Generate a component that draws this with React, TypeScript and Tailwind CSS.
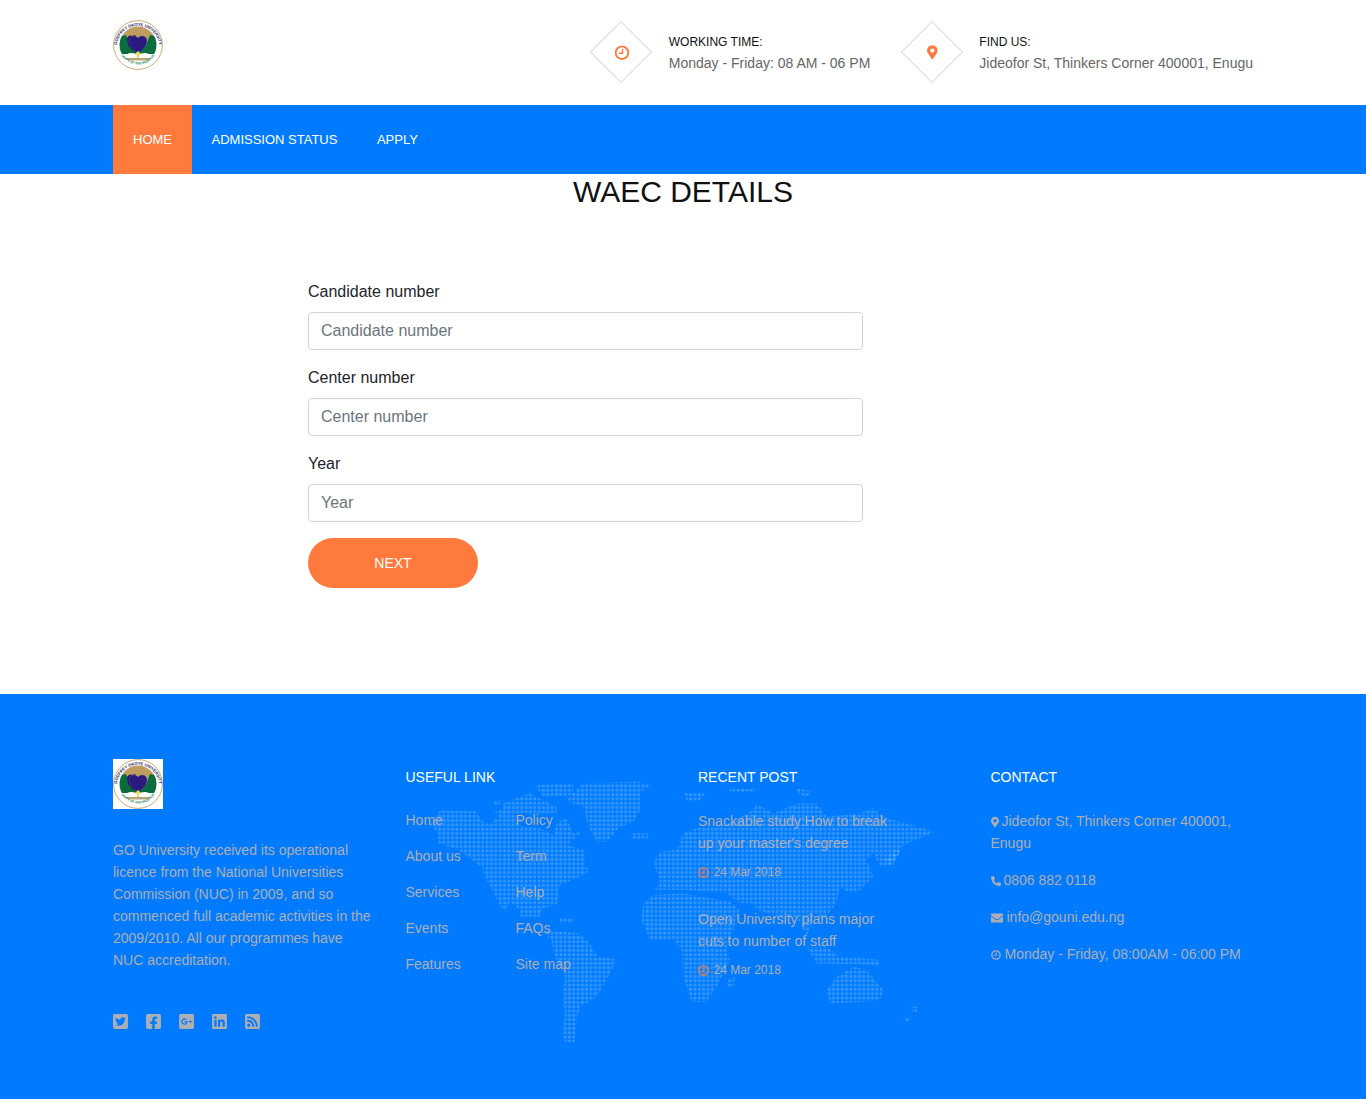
import {
  FaEnvelope,
  FaFacebookSquare,
  FaGooglePlusSquare,
  FaLinkedin,
  FaMapMarkerAlt,
  FaPhoneAlt,
  FaRssSquare,
  FaTwitterSquare,
} from "react-icons/fa";

type Pt = [number, number];

const usefulLinks = ["Home", "About us", "Services", "Events", "Features"];
const moreLinks = ["Policy", "Term", "Help", "FAQs", "Site map"];

const westShapes: Pt[][] = [
  [[280, 90], [300, 90], [300, 105], [280, 105]],
  [[310, 100], [390, 70], [470, 110], [470, 130], [270, 135], [310, 115]],
  [[405, 45], [520, 40], [520, 75], [430, 80]],
  [[505, 85], [550, 40], [715, 35], [750, 45], [720, 70], [720, 120], [700, 155], [660, 170], [620, 215], [590, 215], [565, 170], [550, 110], [505, 95]],
  [[695, 190], [745, 190], [745, 205], [695, 205]],
  [[480, 445], [520, 445], [520, 460], [480, 460]],
  [[90, 165], [118, 122], [225, 122], [245, 150], [270, 165], [300, 130], [345, 130], [350, 165], [420, 175], [460, 195], [470, 160], [500, 145], [520, 190], [545, 185], [520, 210], [500, 225], [555, 240], [555, 290], [570, 300], [540, 320], [480, 345], [470, 405], [430, 415], [420, 440], [360, 440], [360, 420], [330, 395], [320, 425], [300, 410], [280, 365], [250, 310], [250, 295], [210, 265], [175, 240], [115, 220], [115, 190]],
  [[420, 480], [535, 490], [570, 520], [590, 555], [650, 570], [640, 590], [620, 630], [590, 680], [540, 710], [530, 750], [525, 815], [495, 815], [485, 790], [495, 740], [490, 670], [495, 620], [460, 550], [455, 510]],
];

const eastShapes: Pt[][] = [
  [[40, 280], [60, 245], [110, 240], [130, 190], [180, 170], [260, 165], [340, 120], [350, 100], [400, 130], [470, 100], [530, 100], [560, 140], [660, 130], [700, 115], [740, 145], [800, 160], [885, 185], [840, 205], [790, 225], [760, 285], [720, 290], [700, 250], [680, 270], [700, 320], [660, 360], [630, 370], [600, 350], [590, 400], [550, 450], [525, 430], [500, 500], [470, 440], [420, 440], [350, 420], [340, 400], [300, 400], [260, 370], [140, 360], [90, 360], [45, 360], [60, 330]],
  [[10, 400], [40, 375], [130, 370], [270, 395], [300, 420], [280, 480], [260, 540], [270, 570], [230, 650], [200, 695], [155, 695], [130, 620], [125, 540], [100, 510], [30, 510], [5, 450]],
  [[500, 530], [560, 530], [600, 560], [720, 570], [720, 585], [530, 580]],
  [[560, 660], [590, 620], [640, 590], [680, 600], [730, 660], [720, 690], [680, 695], [570, 700]],
  [[815, 710], [835, 710], [835, 725], [815, 725]],
  [[790, 745], [815, 740], [800, 760]],
  [[265, 625], [285, 620], [280, 650], [262, 650]],
  [[270, 55], [345, 55], [345, 65], [270, 65]],
  [[135, 70], [195, 70], [180, 95], [140, 95]],
  [[470, 55], [520, 65], [500, 80], [470, 70]],
  [[735, 270], [770, 235], [780, 250], [750, 285]],
];

const toPoints = (shape: Pt[], originX: number) =>
  shape.map(([x, y]) => `${originX + x / 3},${770 + y / 3}`).join(" ");

function WorldMap() {
  return (
    <svg className="absolute left-0 top-0 h-full w-full" aria-hidden="true">
      <defs>
        <pattern id="map-dots" width="4.33" height="4.33" patternUnits="userSpaceOnUse">
          <rect x="0.6" y="0.6" width="3.1" height="3.1" rx="1.2" fill="#ffffff" fillOpacity="0.2" />
        </pattern>
      </defs>
      <g transform="translate(0 -694)" fill="url(#map-dots)">
        {westShapes.map((s, i) => (
          <polygon key={i} points={toPoints(s, 400)} />
        ))}
        {eastShapes.map((s, i) => (
          <polygon key={i} points={toPoints(s, 640)} />
        ))}
      </g>
    </svg>
  );
}

// old font-awesome clock-o, hands point up and left
function ClockIcon({ className }: { className?: string }) {
  return (
    <svg viewBox="0 0 16 16" className={className} fill="none" stroke="currentColor">
      <circle cx="8" cy="8" r="6.7" strokeWidth="2" />
      <path d="M8.6 3.8v4.8H4.6" strokeWidth="1.5" />
    </svg>
  );
}

function Logo({ id }: { id: string }) {
  return (
    <svg width="50" height="50" viewBox="0 0 50 50" className="block">
      <defs>
        <clipPath id={`${id}-disc`}>
          <circle cx="25" cy="25" r="18.5" />
        </clipPath>
        <path id={`${id}-top`} d="M3.8 27a21.2 21.2 0 0 1 42.4 0" />
        <path id={`${id}-bottom`} d="M8 35a20 20 0 0 0 34 0" />
      </defs>
      <circle cx="25" cy="25" r="24.4" fill="#fff" stroke="#c9ab78" strokeWidth="1" />
      <g clipPath={`url(#${id}-disc)`}>
        <rect x="5" y="5" width="40" height="40" fill="#fff" />
        <rect x="5" y="6" width="40" height="18" fill="#bf9c5f" />
        <path d="M5 17l8-2 4 10 8 7 8-7 4-10 8 2v17H5z" fill="#0b6d3d" />
        <path d="M14 18c2-3 4-3 5-2l3-1 1 2 4 4-2 12-6-3-4-5z" fill="#1f1668" />
        <path d="M25 33c-5-3-9-7-9-12 0-3 2-5 5-5 2 0 3 1 4 2 1-1 2-2 4-2 3 0 5 2 5 5 0 5-4 9-9 12z" fill="#2a1a80" stroke="#6b6aa8" strokeWidth="0.4" />
        <path d="M9 38c5-6 11-6 16-3 5-3 11-3 16 3z" fill="#fff" />
        <path d="M10 38h30v2.4H10z" fill="#b9a67c" />
        <path d="M25 31l3 3-2 1v3h-2v-3l-2-1z" fill="#f3d75c" />
      </g>
      <text fontSize="4.1" fontFamily="'Liberation Sans', sans-serif" fontWeight="700" fill="#1d1a66">
        <textPath href={`#${id}-top`} startOffset="50%" textAnchor="middle">
          GODFREY OKOYE UNIVERSITY
        </textPath>
      </text>
      <text fontSize="3.4" fontFamily="'Liberation Sans', sans-serif" fontWeight="700" fill="#2f8a5f">
        <textPath href={`#${id}-bottom`} startOffset="50%" textAnchor="middle">
          UNITY OF KNOWLEDGE
        </textPath>
      </text>
    </svg>
  );
}

function InfoBlock({ icon, title, text }: { icon: React.ReactNode; title: string; text: string }) {
  return (
    <div className="flex items-center">
      <div className="flex h-[62px] w-[62px] items-center justify-center">
        <div className="flex h-[44px] w-[44px] rotate-45 items-center justify-center border border-[#d9d9e3]">
          <span className="-rotate-45 text-[#ff7a3c]">{icon}</span>
        </div>
      </div>
      <div className="ml-[16.5px] mt-[2px]">
        <div className="text-[12px] uppercase leading-[18px] text-[#111]">{title}</div>
        <div className="mt-[2px] text-[14px] leading-[21px] text-[#666]">{text}</div>
      </div>
    </div>
  );
}

function FormField({ label }: { label: string }) {
  return (
    <div className="mb-4">
      <label className="mb-2 block text-[16px] leading-6 text-[#212529]">{label}</label>
      <input
        placeholder={label}
        className="block h-[38px] w-full rounded border border-[#ced4da] px-3 text-[16px] text-[#495057] placeholder:text-[#6c757d]"
      />
    </div>
  );
}

function Post({ title, last }: { title: string; last?: boolean }) {
  return (
    <div className={last ? "" : "mb-[25px]"}>
      <div className="w-[200px] text-[14px] leading-[22px]">{title}</div>
      <div className="mt-[7px] flex h-[22px] items-center text-[12px]">
        <ClockIcon className="mr-[4.5px] h-[11px] w-[11px] text-[#ff7a3c]" />
        24 Mar 2018
      </div>
    </div>
  );
}

export default function App() {
  return (
    <div className="font-['Liberation_Sans',Arial,sans-serif]">
      <header className="mx-auto flex h-[105px] w-[1170px] items-start justify-between px-[15px]">
        <div className="pt-5">
          <Logo id="head-logo" />
        </div>
        <div className="flex gap-[30.5px] pt-[21px]">
          <InfoBlock icon={<ClockIcon className="h-[15px] w-[15px] translate-x-[1px]" />} title="Working time:" text="Monday - Friday: 08 AM - 06 PM" />
          <InfoBlock icon={<FaMapMarkerAlt className="h-[14px] w-[11px]" />} title="Find us:" text="Jideofor St, Thinkers Corner 400001, Enugu" />
        </div>
      </header>

      <nav className="h-[69px] bg-[#007bff]">
        <ul className="mx-auto flex h-full w-[1170px] px-[15px] text-[13px] uppercase text-white">
          <li className="flex items-center bg-[#ff7a3c] px-5">Home</li>
          <li className="flex items-center px-[19.5px]">Admission Status</li>
          <li className="flex items-center pl-5">Apply</li>
        </ul>
      </nav>

      <main className="h-[520px]">
        <h1 className="text-center text-[30px] leading-[36px] text-[#111]">WAEC DETAILS</h1>
        <form className="mx-auto mt-[70px] w-[750px]">
          <div className="w-[555px]">
            <FormField label="Candidate number" />
            <FormField label="Center number" />
            <FormField label="Year" />
            <button type="button" className="h-[50px] w-[170px] rounded-full bg-[#ff7a3c] text-[14px] uppercase text-white">
              Next
            </button>
          </div>
        </form>
      </main>

      <footer className="relative h-[405px] overflow-hidden bg-[#007bff] text-[#adaeb4]">
        <WorldMap />
        <div className="relative mx-auto grid w-[1170px] grid-cols-4 pt-[65px]">
          <div className="px-[15px]">
            <div className="h-[50px] w-[50px] bg-white">
              <Logo id="foot-logo" />
            </div>
            <p className="mt-[30px] text-[14px] leading-[22px]">
              GO University received its operational licence from the National Universities Commission (NUC) in 2009, and so commenced full academic activities in the 2009/2010. All our programmes have NUC accreditation.
            </p>
            <div className="mt-[42px] flex gap-[18px]">
              <FaTwitterSquare className="h-[17px] w-[15px]" />
              <FaFacebookSquare className="h-[17px] w-[15px]" />
              <FaGooglePlusSquare className="h-[17px] w-[15px]" />
              <FaLinkedin className="h-[17px] w-[15px]" />
              <FaRssSquare className="h-[17px] w-[15px]" />
            </div>
          </div>

          <div className="px-[15px] pt-[7px]">
            <h4 className="mb-[21px] text-[14px] uppercase leading-[22px] text-white">Useful link</h4>
            <div className="flex text-[14px] leading-[22px]">
              <ul className="flex w-[110px] flex-col gap-[14px]">
                {usefulLinks.map((l) => (
                  <li key={l}>{l}</li>
                ))}
              </ul>
              <ul className="flex flex-col gap-[14px]">
                {moreLinks.map((l) => (
                  <li key={l}>{l}</li>
                ))}
              </ul>
            </div>
          </div>

          <div className="px-[15px] pt-[7px]">
            <h4 className="mb-[22px] text-[14px] uppercase leading-[22px] text-white">Recent post</h4>
            <Post title="Snackable study:How to break up your master's degree" />
            <Post title="Open University plans major cuts to number of staff" last />
          </div>

          <div className="px-[15px] pt-[7px]">
            <h4 className="mb-[22px] text-[14px] uppercase leading-[22px] text-white">Contact</h4>
            <div className="text-[14px] leading-[22px]">
              <p className="mb-[15px]">
                <FaMapMarkerAlt className="mr-[3px] inline h-[12px] w-[8px]" />
                Jideofor St, Thinkers Corner 400001, Enugu
              </p>
              <p className="mb-[15px]">
                <FaPhoneAlt className="mr-[3px] inline h-[10px] w-[10px]" />
                0806 882 0118
              </p>
              <p className="mb-[15px]">
                <FaEnvelope className="mr-[4px] inline h-[12px] w-[12px]" />
                info@gouni.edu.ng
              </p>
              <p>
                <ClockIcon className="mr-[4px] inline h-[10px] w-[10px]" />
                Monday - Friday, 08:00AM - 06:00 PM
              </p>
            </div>
          </div>
        </div>
      </footer>
    </div>
  );
}
